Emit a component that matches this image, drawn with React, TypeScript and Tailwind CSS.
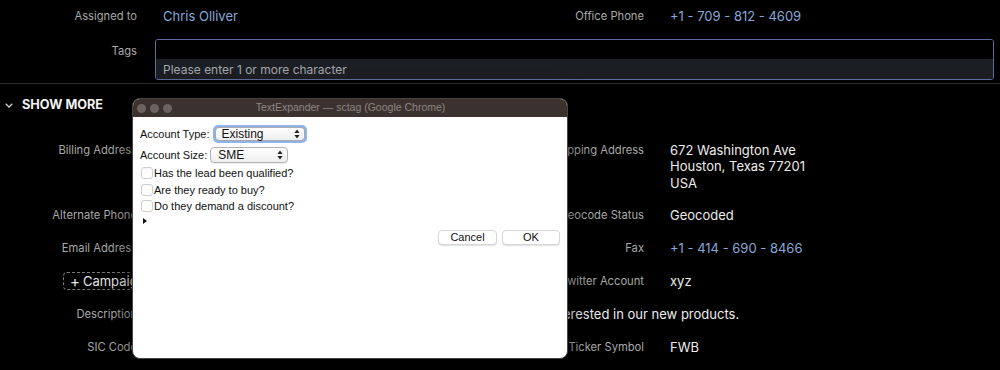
import React from "react";

const SelectArrows = () => (
  <svg width="6" height="10" viewBox="0 0 6 10" className="shrink-0">
    <path d="M3 0.5 L5.6 4 L0.4 4 Z" fill="#222" />
    <path d="M3 9.5 L5.6 6 L0.4 6 Z" fill="#222" />
  </svg>
);

const Check = ({ label }: { label: string }) => (
  <div className="flex items-center h-[16.5px]">
    <div className="w-[12px] h-[12px] rounded-[3px] border border-[#cfcfcf] bg-white shadow-[inset_0_1px_1px_rgba(0,0,0,0.04)]" />
    <span className="ml-[1px]">{label}</span>
  </div>
);

function Dialog() {
  return (
    <div className="absolute left-[132px] top-[98px] w-[436px] h-[261px] rounded-[8px] overflow-hidden flex flex-col border border-[#4a4240] bg-white shadow-[0_8px_30px_rgba(0,0,0,0.6)]">
      <div className="h-[18px] bg-[#3b3230] flex items-center relative shrink-0">
        <div className="flex gap-[4px] pl-[4px]">
          <div className="w-[9px] h-[9px] rounded-full bg-[#6c6360]" />
          <div className="w-[9px] h-[9px] rounded-full bg-[#6c6360]" />
          <div className="w-[9px] h-[9px] rounded-full bg-[#6c6360]" />
        </div>
        <div className="flex-1 text-center text-[10.5px] text-[#8f8683] pr-[38px] font-['Liberation_Sans',Arial,sans-serif]">
          TextExpander — sctag (Google Chrome)
        </div>
      </div>
      <div className="flex-1 flex flex-col pl-[7px] pr-[7px] pt-[8px] text-[11px] text-[#111] font-['Liberation_Sans',Arial,sans-serif]">
        <div className="flex items-center h-[18px]">
          <span>Account Type:</span>
          <div className="ml-[3px] w-[94px] h-[18px] rounded-[5px] bg-[#8fb4ec] p-[2px]">
            <div className="w-full h-full rounded-[4px] bg-gradient-to-b from-white to-[#efefef] border border-[#a9a9a9] flex items-center justify-between pl-[6px] pr-[4px] text-[12px]">
              <span>Existing</span>
              <SelectArrows />
            </div>
          </div>
        </div>
        <div className="flex items-center h-[16px] mt-[4px]">
          <span>Account Size:</span>
          <div className="ml-[3px] w-[78px] h-[16px] rounded-[4px] bg-gradient-to-b from-white to-[#efefef] border border-[#b3b3b3] shadow-[0_1px_1px_rgba(0,0,0,0.08)] flex items-center justify-between pl-[7px] pr-[4px] text-[12px]">
            <span>SME</span>
            <SelectArrows />
          </div>
        </div>
        <div className="mt-[2px] flex flex-col pl-[1px]">
          <Check label="Has the lead been qualified?" />
          <Check label="Are they ready to buy?" />
          <Check label="Do they demand a discount?" />
        </div>
        <div className="h-[13px] flex items-center pl-[3px]">
          <svg width="4" height="6" viewBox="0 0 4 6">
            <path d="M0 0 L4 3 L0 6 Z" fill="#111" />
          </svg>
        </div>
        <div className="flex justify-end gap-[5px] mt-[2px]">
          <div className="w-[59px] h-[15px] rounded-[4px] bg-white border border-[#d6d6d6] shadow-[0_1px_1px_rgba(0,0,0,0.12)] flex items-center justify-center text-[11px]">
            Cancel
          </div>
          <div className="w-[58px] h-[15px] rounded-[4px] bg-white border border-[#d6d6d6] shadow-[0_1px_1px_rgba(0,0,0,0.12)] flex items-center justify-center text-[11px]">
            OK
          </div>
        </div>
      </div>
    </div>
  );
}

const L = ({ children, className = "" }: { children?: React.ReactNode; className?: string }) => (
  <div className={"text-right text-[11.2px] text-[#a9a9a9] whitespace-nowrap " + className}>{children}</div>
);
const V = ({ children, className = "", blue = false }: { children?: React.ReactNode; className?: string; blue?: boolean }) => (
  <div className={(blue ? "text-[#86a9db] " : "text-[#ececec] ") + "text-[13px] whitespace-nowrap " + className}>{children}</div>
);

export default function App() {
  return (
    <div className="relative w-[1000px] h-[370px] overflow-hidden bg-black font-['Inter','Noto_Sans',sans-serif]">
      {/* top rows */}
      <div className="grid grid-cols-[137px_331px_124px_1fr] gap-x-[26px] pt-[8px]">
        <L className="leading-[16px]">Assigned to</L>
        <V blue className="leading-[16px]">Chris Olliver</V>
        <L className="leading-[16px]">Office Phone</L>
        <V blue className="leading-[16px]">+1 - 709 - 812 - 4609</V>
      </div>
      <div className="flex mt-[15px] pr-[6px]">
        <L className="w-[137px] shrink-0 pt-[4px] leading-[16px]">Tags</L>
        <div className="ml-[18px] flex-1 h-[41px] rounded-[3px] border border-[#5d6b9e] flex flex-col overflow-hidden">
          <div className="h-[23px] bg-black" />
          <div className="flex-1 bg-[#1b1e22] flex items-center pt-[2px] pl-[7px] text-[12px] text-[#a3a6ab]">
            Please enter 1 or more character
          </div>
        </div>
      </div>
      <div className="mt-[3px] h-px bg-[#2f2f2f]" />
      <div className="flex items-center h-[16px] mt-[13px] pl-[5px]">
        <svg width="8" height="5" viewBox="0 0 8 5" className="text-[#cfcfcf]">
          <path d="M0.7 0.7 L4 4 L7.3 0.7" fill="none" stroke="currentColor" strokeWidth="1.3" />
        </svg>
        <span className="ml-[9px] text-[12.7px] font-bold text-[#f2f2f2]">SHOW MORE</span>
      </div>
      {/* lower grid */}
      <div className="grid grid-cols-[137px_331px_124px_1fr] gap-x-[26px] gap-y-4 mt-[28.75px] items-start leading-[16.5px]">
        <L>Billing Address</L>
        <div className="h-[49.5px]" />
        <L>Shipping Address</L>
        <V>
          <div>672 Washington Ave</div>
          <div>Houston, Texas 77201</div>
          <div>USA</div>
        </V>

        <L>Alternate Phone</L>
        <div className="h-[16.5px]" />
        <L>Geocode Status</L>
        <V>Geocoded</V>

        <L>Email Address</L>
        <div className="h-[16.5px]" />
        <L>Fax</L>
        <V blue>+1 - 414 - 690 - 8466</V>

        <div className="h-[18px] flex items-center pl-[63px]">
          <div className="h-[18px] flex items-center px-[6px] rounded-[4px] border border-dashed border-[#7a7a7a] text-[13px] text-[#e6e6e6] whitespace-nowrap">
            <span className="mr-[3px] text-[15px] leading-none">+</span>Campaigns
          </div>
        </div>
        <div className="h-[18px]" />
        <L className="leading-[18px]">Twitter Account</L>
        <V className="leading-[18px]">xyz</V>

        <L>Description</L>
        <V className="col-span-3">Spoke with the procurement teams last week; they seem quite interested in our new products.</V>

        <L>SIC Code</L>
        <div className="h-[16.5px]" />
        <L>Ticker Symbol</L>
        <V>FWB</V>
      </div>
      <Dialog />
    </div>
  );
}
